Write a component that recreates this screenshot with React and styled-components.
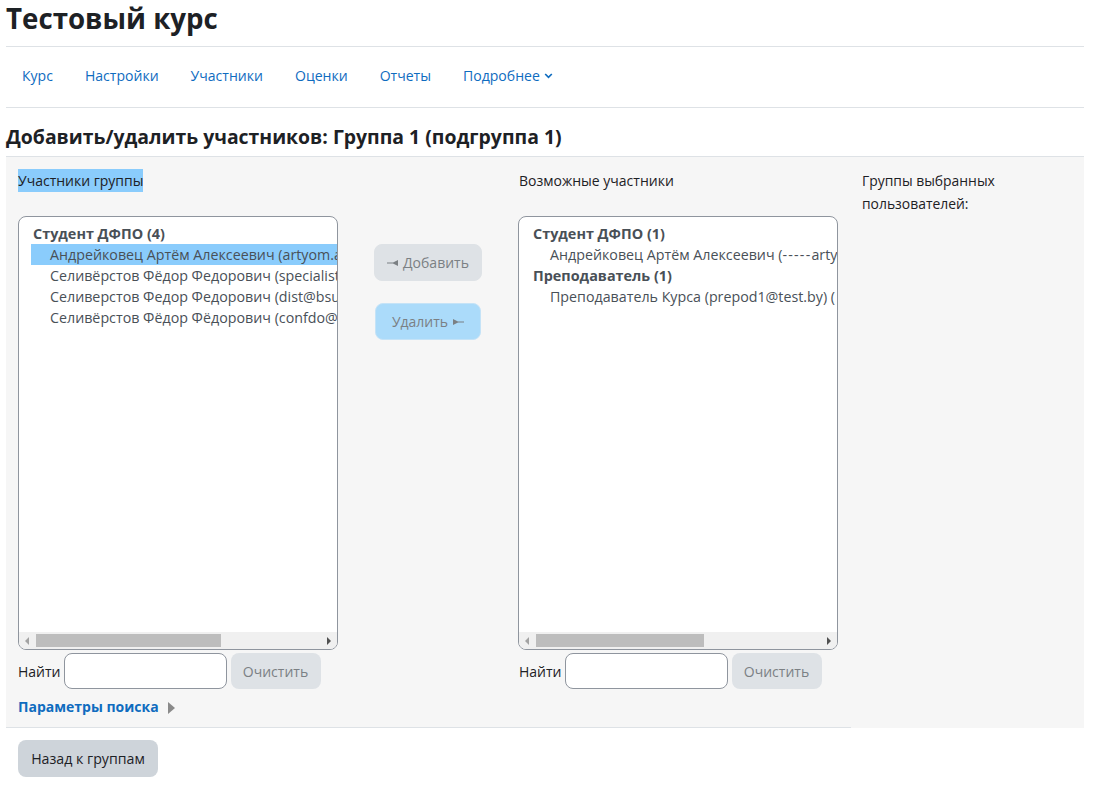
import React from 'react'
import styled, { createGlobalStyle } from 'styled-components'

const GlobalStyle = createGlobalStyle`
  html, body {
    margin: 0;
    padding: 0;
    background: #fff;
    font-family: "Open Sans", "Noto Sans", sans-serif;
    color: #1d2125;
  }
`

const Page = styled.div`
  width: 1078px;
  margin-left: 6px;
  font-size: 14px;
  line-height: 21px;
`

const CourseTitle = styled.h1`
  margin: 0;
  height: 46px;
  font-size: 27.7px;
  line-height: 37px;
  font-weight: 700;
  color: #1d2125;
  border-bottom: 1px solid #dee2e6;
  box-sizing: content-box;
`

const Nav = styled.nav`
  display: flex;
  align-items: center;
  height: 60px;
  box-sizing: content-box;
  border-bottom: 1px solid #dee2e6;
`

const NavLink = styled.a`
  display: flex;
  align-items: center;
  gap: 4px;
  padding: 0 16px;
  margin-top: -3px;
  color: #0f6cbf;
  font-size: 14.05px;
  white-space: nowrap;
`

const SectionTitle = styled.h2`
  margin: 0;
  height: 48px;
  font-size: 19.4px;
  line-height: 58px;
  font-weight: 700;
  color: #1d2125;
  box-sizing: border-box;
`

const Panel = styled.div`
  display: grid;
  grid-template-columns: 320px 180px 320px 1fr;
  column-gap: 0;
  height: 572px;
  box-sizing: border-box;
  padding: 12px 12px 0;
  background: #f6f6f6;
  border-top: 1px solid #dee2e6;
`

const Column = styled.div`
  display: flex;
  flex-direction: column;
`

const ColumnLabel = styled.div`
  height: 47px;
  line-height: 23px;
  font-size: 14px;
  padding-left: ${(props) => props.$indent || 0}px;
`

const Highlight = styled.span`
  display: inline-block;
  background: #8accfc;
`

const ListBox = styled.div`
  position: relative;
  height: 434px;
  box-sizing: border-box;
  padding: 6px 0 0 12px;
  background: #fff;
  border: 1px solid #8f959e;
  border-radius: 8px;
  overflow: hidden;
  color: #495057;
  font-size: 14.25px;
`

const GroupName = styled.div`
  height: 21px;
  padding-left: 2px;
  font-size: 14.4px;
  font-weight: 700;
  white-space: nowrap;
`

const Member = styled.div`
  height: 21px;
  padding-left: 19px;
  white-space: nowrap;
  background: ${(props) => (props.$selected ? '#8accfc' : 'transparent')};
`

const Dashes = styled.span`
  letter-spacing: 1.2px;
`

const ScrollTrack = styled.div`
  position: absolute;
  left: 0;
  right: 0;
  bottom: 0;
  height: 17px;
  background: #f0f0f0;
`

const ScrollThumb = styled.div`
  position: absolute;
  top: 2px;
  left: 17px;
  height: 13px;
  width: ${(props) => props.$width}px;
  background: #bdbdbd;
`

const ScrollArrow = styled.span`
  position: absolute;
  top: 5px;
  ${(props) => (props.$right ? 'right: 6px;' : 'left: 6px;')}
  width: 0;
  height: 0;
  border-top: 4px solid transparent;
  border-bottom: 4px solid transparent;
  ${(props) =>
    props.$right
      ? 'border-left: 4px solid #505050;'
      : 'border-right: 4px solid #a3a3a3;'}
`

const SearchRow = styled.div`
  display: flex;
  align-items: center;
  margin-top: 3px;
  height: 36px;
`

const SearchLabel = styled.label`
  font-size: 14px;
  margin-right: 3px;
  padding-left: ${(props) => props.$indent || 0}px;
`

const SearchInput = styled.input`
  width: 163px;
  height: 36px;
  box-sizing: border-box;
  background: #fff;
  border: 1px solid #8f959e;
  border-radius: 8px;
  margin-right: 4px;
`

const ClearButton = styled.button`
  width: 90px;
  height: 36px;
  border: none;
  border-radius: 8px;
  padding: 0;
  background: #dee2e6;
  color: #7b8084;
  font: inherit;
`

const SearchOptions = styled.a`
  display: flex;
  align-items: center;
  margin-top: 7px;
  font-weight: 700;
  color: #0f6cbf;
  white-space: nowrap;
`

const OptionsCaret = styled.span`
  margin: 3px 0 0 9px;
  width: 0;
  height: 0;
  border-top: 6px solid transparent;
  border-bottom: 6px solid transparent;
  border-left: 7px solid #8a8a8a;
`

const Actions = styled.div`
  display: flex;
  flex-direction: column;
  align-items: center;
  gap: 22px;
  padding-top: 75px;
`

const ActionButton = styled.button`
  display: flex;
  align-items: center;
  justify-content: center;
  gap: 5px;
  width: ${(props) => props.$width}px;
  height: 37px;
  box-sizing: border-box;
  padding: 0;
  border-radius: 8px;
  font: inherit;
  color: #7b8084;
  border: 1px solid ${(props) => (props.$primary ? '#c5e3f7' : '#dee2e6')};
  background: ${(props) => (props.$primary ? '#abdbfa' : '#dee2e6')};
`

const SideLabel = styled.div`
  padding-left: 24px;
  width: 150px;
  line-height: 23px;
  font-size: 13.9px;
`

const Footer = styled.div`
  width: 845px;
  box-sizing: border-box;
  margin-top: -1px;
  padding: 12px 12px 0;
  border-top: 1px solid #dee2e6;
`

const BackButton = styled.button`
  width: 140px;
  height: 37px;
  padding: 0;
  border: none;
  border-radius: 8px;
  background: #ced4da;
  color: #1d2125;
  font: inherit;
  font-size: 14.2px;
`

const ArrowIcon = ({ flip }) => (
  <svg
    width="11"
    height="8"
    viewBox="0 0 11 8"
    style={flip ? { transform: 'scaleX(-1)' } : undefined}
  >
    <path d="M0 3.4h7v1.2H0z M5 4 11 1v6z" fill="#7b8084" />
  </svg>
)

const Caret = () => (
  <svg width="9" height="9" viewBox="0 0 9 9">
    <path d="M1.2 3 4.5 6.3 7.8 3" fill="none" stroke="#0f6cbf" strokeWidth="1.7" />
  </svg>
)

const Scrollbar = ({ thumb }) => (
  <ScrollTrack>
    <ScrollArrow />
    <ScrollThumb $width={thumb} />
    <ScrollArrow $right />
  </ScrollTrack>
)

const Search = ({ indent }) => (
  <SearchRow>
    <SearchLabel $indent={indent}>Найти</SearchLabel>
    <SearchInput type="text" />
    <ClearButton type="button">Очистить</ClearButton>
  </SearchRow>
)

export default function App() {
  return (
    <Page>
      <GlobalStyle />
      <CourseTitle>Тестовый курс</CourseTitle>
      <Nav>
        <NavLink>Курс</NavLink>
        <NavLink>Настройки</NavLink>
        <NavLink>Участники</NavLink>
        <NavLink>Оценки</NavLink>
        <NavLink>Отчеты</NavLink>
        <NavLink>
          Подробнее <Caret />
        </NavLink>
      </Nav>
      <SectionTitle>Добавить/удалить участников: Группа 1 (подгруппа 1)</SectionTitle>
      <Panel>
        <Column>
          <ColumnLabel>
            <Highlight>Участники группы</Highlight>
          </ColumnLabel>
          <ListBox>
            <GroupName>Студент ДФПО (4)</GroupName>
            <Member $selected>Андрейковец Артём Алексеевич (artyom.a</Member>
            <Member>Селивёрстов Фёдор Федорович (specialist</Member>
            <Member>Селиверстов Федор Федорович (dist@bsu</Member>
            <Member>Селивёрстов Фёдор Фёдорович (confdo@</Member>
            <Scrollbar thumb={185} />
          </ListBox>
          <Search />
          <SearchOptions>
            Параметры поиска
            <OptionsCaret />
          </SearchOptions>
        </Column>
        <Actions>
          <ActionButton type="button" $width={108}>
            <ArrowIcon />
            Добавить
          </ActionButton>
          <ActionButton type="button" $width={106} $primary>
            Удалить
            <ArrowIcon flip />
          </ActionButton>
        </Actions>
        <Column>
          <ColumnLabel $indent={1}>Возможные участники</ColumnLabel>
          <ListBox>
            <GroupName>Студент ДФПО (1)</GroupName>
            <Member>
              Андрейковец Артём Алексеевич (<Dashes>-----</Dashes>arty
            </Member>
            <GroupName>Преподаватель (1)</GroupName>
            <Member>Преподаватель Курса (prepod1@test.by) (</Member>
            <Scrollbar thumb={168} />
          </ListBox>
          <Search indent={1} />
        </Column>
        <SideLabel>Группы выбранных пользователей:</SideLabel>
      </Panel>
      <Footer>
        <BackButton type="button">Назад к группам</BackButton>
      </Footer>
    </Page>
  )
}
